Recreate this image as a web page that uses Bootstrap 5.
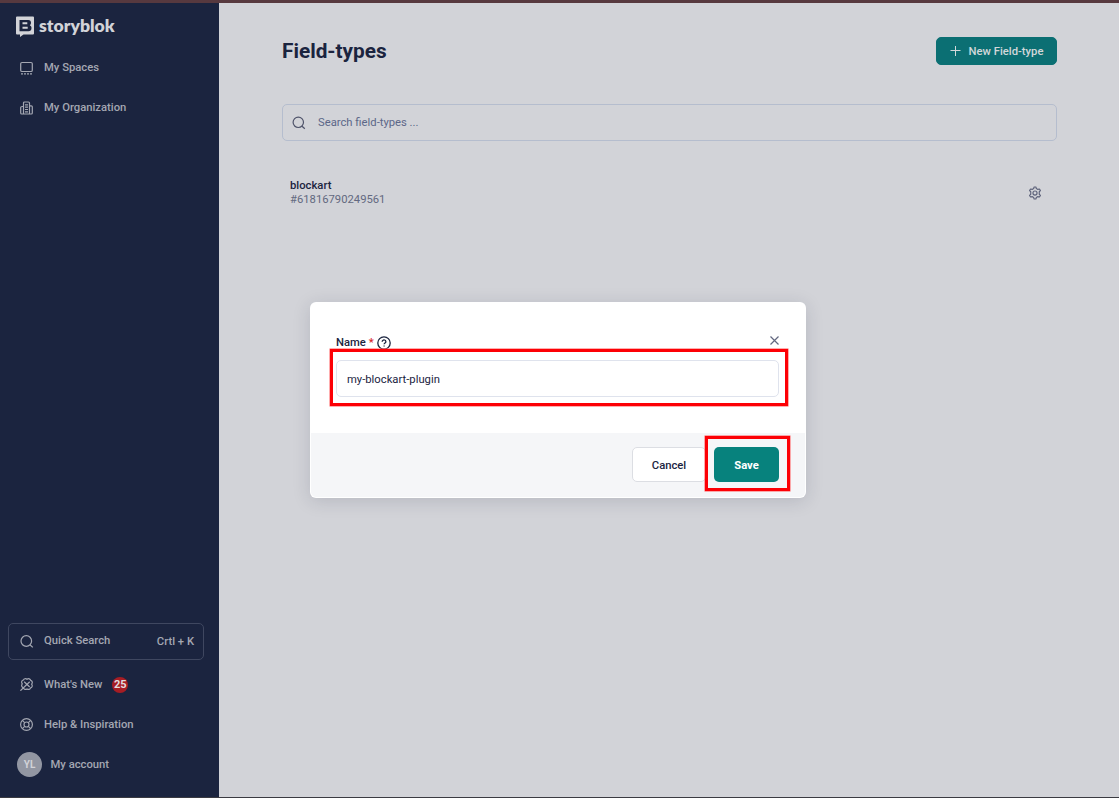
<!DOCTYPE html>
<html lang="en">
<head>
<meta charset="utf-8">
<meta name="viewport" content="width=device-width, initial-scale=1">
<title>Field-types</title>
<link rel="stylesheet" href="https://cdn.jsdelivr.net/npm/bootstrap@5.3.0/dist/css/bootstrap.min.css">
<style>
body{font-family:Roboto,sans-serif;font-size:11.25px;line-height:14px;background:#d2d3d8;color:#1b243f;border-top:3px solid #57393f;border-bottom:1px solid #3b3b42;overflow:hidden}
svg{fill:none;stroke:currentColor;flex:none;display:block}
.sidebar{width:219px;background:#1b243f;color:#a4a7b2;padding:12px 15px 13px 8px;font-weight:500}
.brand{padding-left:8px;height:21px;color:#d2d3d8;font:800 17.6px/22px Lato,sans-serif;gap:5px;margin-bottom:11px}
.side-item{height:40px;padding-left:12px;gap:11px;color:inherit;text-decoration:none}
.side-text{padding-top:2px}
.top-icon{margin-top:2px}
.quick{height:37px;border:1px solid #3f4760;border-radius:5px;padding:0 9px 0 11px;gap:10px;margin-bottom:4px}
.count{width:16px;height:16px;background:#a61d24;color:#e3dcdf;font-size:11px;padding-top:1px;margin-top:1px}
.avatar{width:25px;height:25px;background:#9296a2;color:#d2d3d8;font-size:10px;padding-top:1px}
.page{padding:34px 62px 0 63px}
.page h1{font-size:20.8px;line-height:28px;font-weight:700}
.btn-new{--bs-btn-bg:#0b6f73;--bs-btn-color:#d2d8da;--bs-btn-hover-bg:#0b6f73;--bs-btn-border-color:#0b6f73;width:121px;height:28px;font-size:11.25px;font-weight:500;border-radius:5px;gap:8px}
.search{height:37px;border:1px solid #b5bdce;border-radius:5px;margin-top:39px;padding-left:9px;gap:12px;color:#5c6788}
.type-row{margin-top:38px;padding:0 15px 0 8px}
.overlay-box{left:310px;top:302px;width:496px;height:196px;background:#fff;border-radius:6px;box-shadow:0 3px 18px rgba(27,36,63,.15);padding:1px}
.overlay-body{height:130px;padding:31px 26px 0 25px}
.overlay-foot{background:#f5f6f8;height:64px;border-radius:0 0 5px 5px;padding:0 26px 1px;gap:8px}
.name-input{height:37px;font-size:11.25px;border:1px solid #dfe3ed;border-radius:5px;color:#1b243f;padding:2px 10px 0}
.name-input:focus{box-shadow:none}
.btn-foot{height:35px;font-size:11.25px;font-weight:500;border-radius:5px;padding:3px 0 0}
.btn-cancel{width:74px;background:#fff;border:1px solid #dcdee3;color:#1b243f}
.btn-save{width:65px;background:#07827d;color:#fff;font-weight:700}
.callout-box{position:absolute;border:3px solid #fd0005;box-shadow:0 0 0 .5px #ff5a5d;pointer-events:none}
.c-name{left:20px;top:47px;width:458px;height:57px}
.c-save{left:395px;top:134px;width:85px;height:55px}
</style>
</head>
<body class="vh-100 d-flex">
<aside class="sidebar d-flex flex-column">
  <div class="brand d-flex">
    <svg width="18" height="22" viewBox="0 0 18 22"><path d="M1 1.500h16a1 1 0 0 1 1 1v16a1 1 0 0 1-1 1H7.500L4 22v-2.500H1a1 1 0 0 1-1-1v-16a1 1 0 0 1 1-1z" fill="#d2d3d8" stroke="none"/><path d="M3.500 5h8.800c2 0 2.700 1.300 2.700 2.700 0 1.300-.5 2-1.200 2.500 1 .4 1.700 1.400 1.700 2.700 0 2.200-1.200 3.300-3 3.300h-9z" fill="#1b243f" stroke="none"/><path d="M6.500 8.200h4.800M6.500 12.700h5.200" stroke-width="2"/></svg>
    <span>storyblok</span>
  </div>
  <a class="side-item d-flex align-items-center" href="#">
    <svg class="top-icon" width="13" height="14" viewBox="0 0 13 14"><rect x=".7" y="1.500" width="11.600" height="9" rx="1.300" stroke-width="1.200"/><path d="M1 12.800h11" stroke-width="1.200" stroke-dasharray="2 1"/></svg>
    <span class="side-text">My Spaces</span></a>
  <a class="side-item d-flex align-items-center" href="#">
    <svg class="top-icon" width="13" height="14" viewBox="0 0 13 14" stroke-width="1.200"><path d="M3.500 13V2a1 1 0 0 1 1-1h4a1 1 0 0 1 1 1v11M3.500 5.500h-1.500a1.300 1.300 0 0 0-1.300 1.300V12a1 1 0 0 0 1 1h9.600a1 1 0 0 0 1-1V5.800a1 1 0 0 0-1-1H9.500M5 3.800h3M5 6.200h3M5 8.500h3M5 10.800h3"/></svg>
    <span class="side-text">My Organization</span></a>
  <div class="quick d-flex align-items-center mt-auto">
    <svg width="14" height="14" viewBox="0 0 14 14" stroke-width="1.200"><circle cx="6.300" cy="6" r="5.300"/><path d="M10.200 10l2.600 2.400"/></svg>
    <span style="margin-top:-1px">Quick Search</span><span class="ms-auto">Crtl + K</span>
  </div>
  <a class="side-item d-flex align-items-center" href="#">
    <svg width="13" height="13" viewBox="0 0 13 13" stroke-width="1.200"><path d="M2.300 5.900C1.100 4.200 1.700 2.300 3.500 2 3.900.7 5.700.2 7 1.200 8.500.2 10.300.8 10.700 2.300c1.700.5 2.100 2.500.9 3.900 1.100 1.300.7 3.200-1 3.700-.5 1.600-2.300 2-3.600 1-1.300 1-3.100.5-3.500-1C1.700 9.500 1.100 7.300 2.300 5.900zM.4 12.700l9.300-9M4.200 3.700l5.500 5.300"/></svg>
    <span class="side-text">What's New</span>
    <span class="count rounded-circle d-flex align-items-center justify-content-center fw-bold" style="margin-left:-1px">25</span></a>
  <a class="side-item d-flex align-items-center" href="#">
    <svg width="13" height="13" viewBox="0 0 13 13" stroke-width="1.200"><circle cx="6.500" cy="6.500" r="5.900"/><circle cx="6.500" cy="6.500" r="2.500"/><path d="M2.300 2.300l2.400 2.400M8.300 8.300l2.400 2.400M10.700 2.300L8.300 4.700M4.700 8.300l-2.400 2.400"/></svg>
    <span class="side-text">Help &amp; Inspiration</span></a>
  <a class="side-item d-flex align-items-center" href="#" style="padding-left:9px;gap:8.500px">
    <span class="avatar rounded-circle d-flex align-items-center justify-content-center fw-bold">YL</span><span class="side-text">My account</span></a>
</aside>
<main class="page flex-grow-1">
  <header class="d-flex justify-content-between">
    <h1 class="mb-0">Field-types</h1>
    <button class="btn btn-new d-flex align-items-center justify-content-center p-0"><svg width="11" height="11" viewBox="0 0 11 11"><path d="M5.500 0v10M.5 4.500h10"/></svg><span style="padding-top:2px">New Field-type</span></button>
  </header>
  <div class="search d-flex align-items-center">
    <svg width="14" height="14" viewBox="0 0 14 14" stroke-width="1.200" color="#4f536a"><circle cx="6.300" cy="6.300" r="5.200"/><path d="M10.100 10.200l2.700 2.600"/></svg><span>Search field-types ...</span>
  </div>
  <div class="type-row d-flex align-items-center justify-content-between">
    <div><div style="font-weight:500">blockart</div><div style="color:#636980">#61816790249561</div></div>
    <svg width="14" height="14" viewBox="0 0 24 24" stroke-width="2" color="#5e637b"><path d="M9.700 4.300 10.500 1.700h3l.8 2.600 2.600 1.500 2.700-.7 1.700 2.900-2 1.900v4.200l2 1.900-1.700 2.900-2.700-.7-2.600 1.500-.8 2.600h-3l-.8-2.600-2.600-1.500-2.700.7-1.700-2.900 2-1.900V9.900l-2-1.900 1.700-2.900 2.700.7z" stroke-linejoin="round"/><circle cx="12" cy="12" r="3.500"/></svg>
  </div>
</main>
<section class="overlay-box position-absolute" role="dialog" aria-label="New field-type">
  <div class="overlay-body">
    <div class="d-flex" style="height:26px">
      <label for="name" style="font-weight:500;margin-top:2px">Name <span style="color:#d8232b">*</span></label>
      <svg width="14" height="14" viewBox="0 0 14 14" stroke-width="1.300" style="margin:2px 0 0 3px"><circle cx="7" cy="7" r="6.200"/><path d="M5.200 5.700c0-2.400 3.700-2.200 3.700 0 0 1.300-1.800 1.300-1.800 2.600M7.100 9.400v1.200"/></svg>
      <svg class="ms-auto" width="9" height="9" viewBox="0 0 9 9" color="#636880" stroke-width="1.200" style="margin-top:2px"><path d="M.5.500l8 8M8.500.5l-8 8"/></svg>
    </div>
    <input id="name" class="form-control name-input" value="my-blockart-plugin">
  </div>
  <div class="overlay-foot d-flex align-items-center justify-content-end">
    <button class="btn btn-foot btn-cancel">Cancel</button>
    <button class="btn btn-foot btn-save">Save</button>
  </div>
  <div class="callout-box c-name"></div>
  <div class="callout-box c-save"></div>
</section>
<script src="https://cdn.jsdelivr.net/npm/bootstrap@5.3.0/dist/js/bootstrap.bundle.min.js"></script>
</body>
</html>
